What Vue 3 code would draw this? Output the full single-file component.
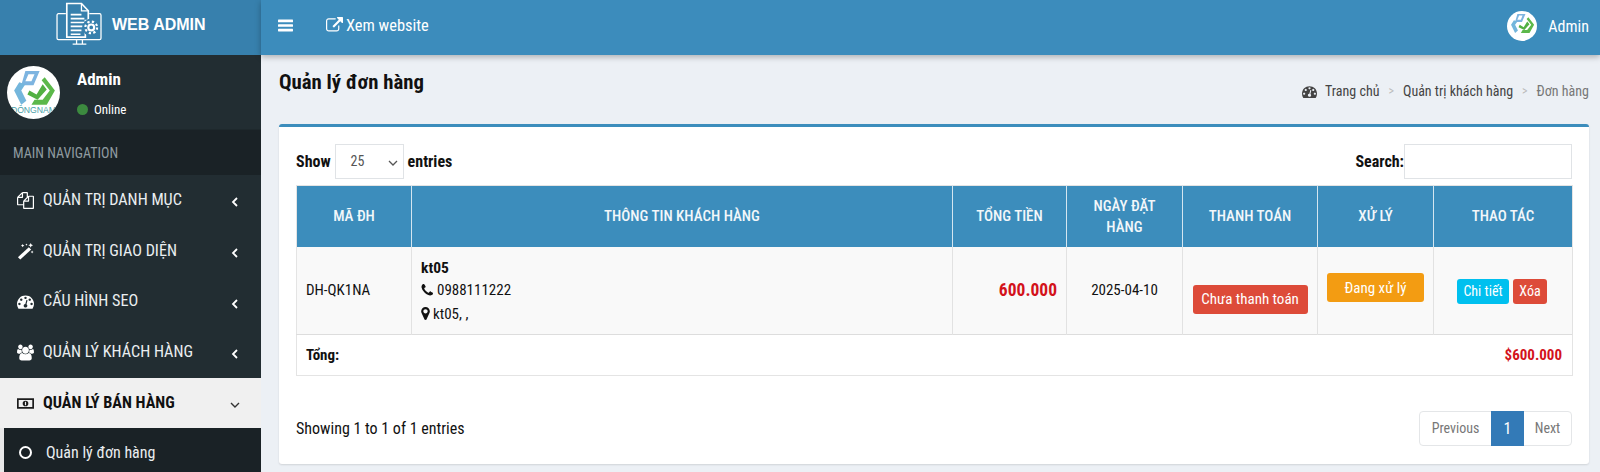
<script setup>
const menu = [
  { label: 'Quản trị danh mục', icon: 'files' },
  { label: 'Quản trị giao diện', icon: 'magic' },
  { label: 'Cấu hình SEO', icon: 'gauge' },
  { label: 'Quản lý khách hàng', icon: 'users' },
]
const gauge = 'M384 1152q0-53-37.5-90.5t-90.5-37.5-90.5 37.5-37.5 90.5 37.5 90.5 90.5 37.5 90.5-37.5 37.5-90.5zm192-448q0-53-37.5-90.5t-90.5-37.5-90.5 37.5-37.5 90.5 37.5 90.5 90.5 37.5 90.5-37.5 37.5-90.5zm428 481l101-382q6-26-7.5-48.5t-38.5-29.5-48 6.5-30 39.5l-101 382q-60 5-107 43.5t-63 98.5q-20 77 20 146t117 89 146-20 89-117q16-60-6-117t-72-91zm660-33q0-53-37.5-90.5t-90.5-37.5-90.5 37.5-37.5 90.5 37.5 90.5 90.5 37.5 90.5-37.5 37.5-90.5zm-640-640q0-53-37.5-90.5t-90.5-37.5-90.5 37.5-37.5 90.5 37.5 90.5 90.5 37.5 90.5-37.5 37.5-90.5zm448 192q0-53-37.5-90.5t-90.5-37.5-90.5 37.5-37.5 90.5 37.5 90.5 90.5 37.5 90.5-37.5 37.5-90.5zm320 448q0 261-141 483-19 29-54 29h-1402q-35 0-54-29-141-221-141-483 0-182 71-348t191-286 286-191 348-71 348 71 286 191 191 286 71 348z'
const files = 'M1696 384q40 0 68 28t28 68v1216q0 40-28 68t-68 28h-960q-40 0-68-28t-28-68v-288h-544q-40 0-68-28t-28-68v-672q0-40 20-88t48-76l408-408q28-28 76-48t88-20h416q40 0 68 28t28 68v328q68-40 128-40h416zm-544 213l-299 299h299v-299zm-640-384l-299 299h299v-299zm196 647l316-316v-416h-384v416q0 40-28 68t-68 28h-416v640h512v-256q0-40 20-88t48-76zm956 804v-1152h-384v416q0 40-28 68t-68 28h-416v640h896z'
const users = 'M593 896q-162 5-265 128h-134q-82 0-138-40.500t-56-118.500q0-353 124-353 6 0 43.500 21t97.500 42.500 119 21.500q67 0 133-23-5 37-5 66 0 139 81 256zm1071 637q0 120-73 189.500t-194 69.500h-874q-121 0-194-69.500t-73-189.500q0-53 3.500-103.500t14-109 26.500-108.500 43-97.500 62-81 85.500-53.500 111.500-20q10 0 43 21.500t73 48 107 48 135 21.500 135-21.500 107-48 73-48 43-21.500q61 0 111.500 20t85.500 53.500 62 81 43 97.500 26.500 108.500 14 109 3.500 103.500zm-1024-1277q0 106-75 181t-181 75-181-75-75-181 75-181 181-75 181 75 75 181zm704 384q0 159-112.500 271.500t-271.500 112.500-271.500-112.500-112.500-271.500 112.500-271.500 271.500-112.500 271.500 112.500 112.500 271.500zm576 225q0 78-56 118.500t-138 40.500h-134q-103-123-265-128 81-117 81-256 0-29-5-66 66 23 133 23 59 0 119-21.500t97.500-42.500 43.500-21q124 0 124 353zm-128-609q0 106-75 181t-181 75-181-75-75-181 75-181 181-75 181 75 75 181z'
</script>

<template>
  <div class="page">
    <aside class="sidebar">
      <div class="brand">
        <svg class="brand-icon" viewBox="0 0 48 44" fill="none" stroke="#fff" stroke-width="1.300">
          <path d="M10 12H2.500a1.500 1.500 0 0 0-1.500 1.500V37a1.500 1.500 0 0 0 1.500 1.500h42a1.500 1.500 0 0 0 1.500-1.500V13.500A1.500 1.500 0 0 0 44.500 12H34" />
          <path d="M11 36V1.500h15l7 7.500v10H30V36z" fill="#3780ad" stroke-width="1.700" />
          <path d="M26 1.500V9h7" stroke-width="1.300" />
          <path d="M15 13h11M15 17h14M15 21h14M15 25h12M15 29h11M15 33h10" stroke-width="1.700" />
          <circle cx="36" cy="26" r="9" fill="#3780ad" stroke="none" />
          <circle cx="36" cy="26" r="3" stroke-width="2.200" />
          <circle cx="36" cy="26" r="6" stroke-width="2.200" stroke-dasharray="2.300 2.400" />
          <path d="M17 43h14M21 39v4M27 39v4" />
        </svg>
        <span class="brand-text">WEB ADMIN</span>
      </div>
      <div class="user-panel">
        <svg class="avatar" viewBox="0 0 52 52">
          <clipPath id="disc"><circle cx="26" cy="26" r="26" /></clipPath>
          <circle cx="26" cy="26" r="26" fill="#fff" />
          <path fill-rule="evenodd" d="M18 5h14l-6 14H14zM21 8l-3 7h6l3-7z" fill="#7db4e0" />
          <path d="M12 16l-5 8 7 14 5-4-5-10 4-6z" fill="#74b6dc" />
          <path d="M37 11l10 13-8 14H24l3-5h8l7-9-8-10z" fill="#5cb84a" />
          <path d="M22 24l7 4 6-10 4 5-9 10-10-5z" fill="#52b043" />
          <text x="26" y="46.500" class="avatar-text" text-anchor="middle" clip-path="url(#disc)">ĐÔNGNAM</text>
        </svg>
        <div class="user-info">
          <b>Admin</b>
          <span class="online"><i class="dot"></i>Online</span>
        </div>
      </div>
      <div class="nav-title">MAIN NAVIGATION</div>
      <ul class="nav">
        <li v-for="item in menu" :key="item.label" class="nav-item">
          <svg v-if="item.icon === 'files'" class="nav-icon" viewBox="0 0 1792 1792" fill="#fff"><path :d="files" /></svg>
          <svg v-else-if="item.icon === 'magic'" class="nav-icon" viewBox="0 0 18 18" fill="#fff">
            <path d="M1 15L12.500 4.500l2.500 2.500L3.500 17.500z" />
            <path d="M14.500 0l.8 1.700 1.700.8-1.700.8-.8 1.700-.8-1.700-1.700-.8 1.700-.8zM6 1l.6 1.200 1.200.6-1.200.6L6 4.600l-.6-1.200-1.200-.6 1.200-.6zM10 .5l.4.8.8.4-.8.4-.4.8-.4-.8-.8-.4.8-.4zM16 8l.5 1 1 .5-1 .5-.5 1-.5-1-1-.5 1-.5z" />
          </svg>
          <svg v-else-if="item.icon === 'gauge'" class="nav-icon" viewBox="0 0 1792 1792" fill="#fff"><path :d="gauge" /></svg>
          <svg v-else class="nav-icon" viewBox="0 0 1920 1792" fill="#fff"><path :d="users" /></svg>
          <span class="nav-label">{{ item.label }}</span>
          <svg class="caret" viewBox="0 0 8 12" fill="none" stroke="#fff" stroke-width="1.800"><path d="M6 2L2 6l4 4" /></svg>
        </li>
        <li class="nav-item active">
          <svg class="nav-icon" viewBox="0 0 18 14" fill="#1c1c1c">
            <path fill-rule="evenodd" d="M0 1.500h18v11H0zM1.800 3.200v7.600h14.400V3.200zM9 4a3 3 0 1 1 0 6 3 3 0 0 1 0-6z" />
            <path d="M8.400 5.200h1.200v3.600H8.400z" fill="#f0f0f0" />
          </svg>
          <span class="nav-label">Quản lý bán hàng</span>
          <svg class="caret open" viewBox="0 0 12 8" fill="none" stroke="#333" stroke-width="1.400"><path d="M2 2l4 4 4-4" /></svg>
        </li>
        <li class="sub-item"><i class="ring"></i>Quản lý đơn hàng</li>
      </ul>
    </aside>

    <div class="main">
      <header class="topbar">
        <svg class="bars" viewBox="0 0 14 12" fill="#fff"><rect width="14" height="2.400" y=".5" rx=".5" /><rect width="14" height="2.400" y="4.800" rx=".5" /><rect width="14" height="2.400" y="9.100" rx=".5" /></svg>
        <a class="site-link">
          <svg viewBox="0 0 1792 1792" fill="#fff"><path d="M1408 928v320q0 119-84.500 203.500t-203.500 84.500h-832q-119 0-203.500-84.500t-84.500-203.500v-832q0-119 84.500-203.500t203.500-84.500h704q14 0 23 9t9 23v64q0 14-9 23t-23 9h-704q-66 0-113 47t-47 113v832q0 66 47 113t113 47h832q66 0 113-47t47-113v-320q0-14 9-23t23-9h64q14 0 23 9t9 23zm384-864v512q0 26-19 45t-45 19-45-19l-176-176-652 652q-10 10-23 10t-23-10l-114-114q-10-10-10-23t10-23l652-652-176-176q-19-19-19-45t19-45 45-19h512q26 0 45 19t19 45z" /></svg>
          Xem website
        </a>
        <div class="top-user">
          <svg class="top-avatar" viewBox="0 0 52 52">
            <circle cx="26" cy="26" r="26" fill="#fff" />
            <path fill-rule="evenodd" d="M18 5h14l-6 14H14zM21 8l-3 7h6l3-7z" fill="#7db4e0" />
            <path d="M12 16l-5 8 7 14 5-4-5-10 4-6z" fill="#74b6dc" />
            <path d="M37 11l10 13-8 14H24l3-5h8l7-9-8-10z" fill="#5cb84a" />
            <path d="M22 24l7 4 6-10 4 5-9 10-10-5z" fill="#52b043" />
          </svg>
          <span>Admin</span>
        </div>
      </header>

      <main class="content">
        <div class="content-head">
          <h1>Quản lý đơn hàng</h1>
          <div class="crumbs">
            <svg viewBox="0 0 1792 1792" fill="#444"><path :d="gauge" /></svg>
            <span>Trang chủ</span><i>&gt;</i><span>Quản trị khách hàng</span><i>&gt;</i><span class="last">Đơn hàng</span>
          </div>
        </div>

        <section class="box">
          <div class="tools">
            <label class="len">Show <span class="select">25<svg viewBox="0 0 12 8" fill="none" stroke="#555" stroke-width="1.300"><path d="M2 2l4 4 4-4" /></svg></span> entries</label>
            <label class="search">Search:<span class="input"></span></label>
          </div>

          <table>
            <colgroup>
              <col style="width:115px" /><col style="width:541px" /><col style="width:114px" /><col style="width:116px" /><col style="width:135px" /><col style="width:116px" /><col style="width:139px" />
            </colgroup>
            <thead>
              <tr>
                <th>MÃ ĐH</th><th>THÔNG TIN KHÁCH HÀNG</th><th>TỔNG TIỀN</th><th>NGÀY ĐẶT HÀNG</th><th>THANH TOÁN</th><th>XỬ LÝ</th><th>THAO TÁC</th>
              </tr>
            </thead>
            <tbody>
              <tr class="row">
                <td>DH-QK1NA</td>
                <td class="customer">
                  <b>kt05</b>
                  <div class="line">
                    <svg viewBox="128 128 1472 1472" fill="#111"><path d="M1600 1240q0 27-10 70.500t-21 68.500q-21 50-122 106-94 51-186 51-27 0-53-3.500t-57.500-12.500-47-14.500-55.500-20.500-49-18q-98-35-175-83-127-79-264-216t-216-264q-48-77-83-175-3-9-18-49t-20.500-55.500-14.500-47-12.500-57.500-3.500-53q0-92 51-186 56-101 106-122 25-11 68.500-21t70.500-10q14 0 21 3 18 6 53 76 11 19 30 54t35 63.500 31 53.500q3 4 17.500 25t21.500 35.500 7 28.500q0 20-28.500 50t-62 55-62 53-28.500 46q0 9 5 22.500t8.500 20.500 14 24 11.500 19q76 137 174 235t235 174q2 1 19 11.500t24 14 20.500 8.500 22.500 5q18 0 46-28.500t53-62 55-62 50-28.500q14 0 28.500 7t35.500 21.500 25 17.500q25 15 53.500 31t63.500 35 54 30q70 35 76 53 3 7 3 21z" /></svg>
                    0988111222
                  </div>
                  <div class="line addr">
                    <svg viewBox="384 128 1024 1536" fill="#111"><path d="M1152 640q0-106-75-181t-181-75-181 75-75 181 75 181 181 75 181-75 75-181zm256 0q0 109-33 179l-364 774q-16 33-47.500 52t-67.500 19-67.500-19-46.500-52l-365-774q-33-70-33-179 0-212 150-362t362-150 362 150 150 362z" /></svg>
                    kt05, ,
                  </div>
                </td>
                <td class="money">600.000</td>
                <td class="center">2025-04-10</td>
                <td class="center"><button class="btn red pay">Chưa thanh toán</button></td>
                <td class="center"><button class="btn orange state">Đang xử lý</button></td>
                <td class="center actions"><button class="btn cyan">Chi tiết</button><button class="btn red">Xóa</button></td>
              </tr>
              <tr class="sum">
                <td colspan="2"><b>Tổng:</b></td>
                <td colspan="5" class="total">$600.000</td>
              </tr>
            </tbody>
          </table>

          <div class="foot">
            <span>Showing 1 to 1 of 1 entries</span>
            <div class="pager"><a>Previous</a><a class="cur">1</a><a>Next</a></div>
          </div>
        </section>
      </main>
    </div>
  </div>
</template>

<style>
html, body { margin: 0; overflow: hidden; }
</style>

<style scoped>
.page {
  display: flex;
  width: 1600px;
  height: 472px;
  overflow: hidden;
  font-family: Roboto, "Liberation Sans", sans-serif;
  font-stretch: 75%;
  font-size: 14px;
  color: #111;
  background: #ecf0f5;
}
.sidebar {
  width: 261px;
  flex: none;
  background: #222d32;
  color: #fff;
}
.brand {
  height: 55px;
  background: #3780ad;
  display: flex;
  align-items: center;
  padding-left: 56px;
  gap: 9px;
}
.brand-icon { width: 47px; height: 43px; margin-top: -8px; }
.brand-text {
  font-family: "Liberation Sans", sans-serif;
  font-stretch: normal;
  font-weight: 700;
  font-size: 16px;
  margin-top: -5px;
}
.user-panel {
  height: 75px;
  display: flex;
  padding: 11px 0 0 7px;
  box-sizing: border-box;
  border-bottom: 1px solid #1e282c;
}
.avatar { width: 53px; height: 53px; }
.avatar-text { font-size: 8.500px; fill: #4a9fa8; font-family: "Liberation Sans", sans-serif; }
.user-info { margin-left: 17px; display: flex; flex-direction: column; }
.user-info b { font-size: 17px; margin-top: 3px; line-height: 20px; }
.online { display: flex; align-items: center; font-size: 13px; margin-top: 13px; }
.dot { width: 11px; height: 11px; border-radius: 50%; background: #3c8a3f; margin-right: 6px; }
.nav-title {
  height: 45px;
  background: #1a2226;
  color: #8f9ba0;
  display: flex;
  align-items: center;
  padding-left: 13px;
  font-size: 14px;
}
.nav { list-style: none; margin: 0; padding: 0; }
.nav-item {
  height: 50.700px;
  display: flex;
  align-items: center;
  padding-left: 17px;
  color: #eaeef0;
  font-size: 16.200px;
  text-transform: uppercase;
  position: relative;
}
.nav-icon { width: 17px; height: 17px; flex: none; margin-right: 9px; }
.nav-label { flex: 1; margin-top: -2px; }
.caret { width: 8px; height: 12px; margin-right: 22px; margin-top: 4px; }
.caret.open { width: 12px; height: 8px; margin-right: 20px; }
.nav-item.active { background: #f0f0f0; color: #111; font-weight: 700; }
.sub-item {
  height: 44px;
  background: #1a2226;
  border-left: 4px solid #e8e8e8;
  display: flex;
  align-items: center;
  padding: 4px 0 0 15px;
  box-sizing: border-box;
  font-size: 16px;
  color: #eaeef0;
}
.ring { width: 9px; height: 9px; border: 2.500px solid #fff; border-radius: 50%; margin-right: 14px; }
.main { flex: 1; min-width: 0; display: flex; flex-direction: column; }
.topbar {
  height: 55px;
  flex: none;
  box-sizing: border-box;
  background: #3c8cbc;
  color: #fff;
  display: flex;
  align-items: center;
  padding: 0 11px 4px 17px;
  box-shadow: 0 2px 6px rgba(0, 0, 0, .28);
  position: relative;
  font-size: 16.400px;
}
.bars { width: 15px; height: 13px; }
.site-link { display: flex; align-items: center; margin-left: 33px; gap: 3px; }
.site-link svg { width: 17px; height: 17px; }
.top-user { margin-left: auto; display: flex; align-items: center; gap: 11px; font-size: 16px; margin-bottom: -1px; }
.top-avatar { width: 30px; height: 30px; }
.content { flex: 1; padding: 0 11px 0 18px; }
.content-head { display: flex; justify-content: space-between; height: 69px; }
h1 { margin: 14px 0 0; font-size: 20.800px; font-weight: 700; line-height: 26px; }
.crumbs { display: flex; align-items: center; height: 20px; margin-top: 26px; font-size: 14px; color: #444; }
.crumbs svg { width: 15px; height: 15px; margin-right: 8px; }
.crumbs i { color: #bbb; font-style: normal; margin: 0 9px; font-size: 12px; }
.crumbs .last { color: #777; }
.box {
  height: 340px;
  background: #fff;
  border-top: 3px solid #3c8dbc;
  border-radius: 3px;
  box-sizing: border-box;
  padding: 17px 17px 0;
  box-shadow: 0 1px 2px rgba(0, 0, 0, .12);
  font-size: 16px;
}
.tools { display: flex; justify-content: space-between; height: 41px; }
.tools label { display: flex; align-items: flex-start; font-weight: 700; line-height: 35px; height: 35px; }
.select {
  width: 69px;
  height: 35px;
  box-sizing: border-box;
  border: 1px solid #e0e3e6;
  margin: 0 4px;
  font-weight: 400;
  color: #555;
  font-size: 14px;
  padding-left: 15px;
  position: relative;
  line-height: 33px;
}
.select svg { position: absolute; right: 4px; top: 14px; width: 12px; height: 8px; }
.input { display: block; width: 168px; height: 35px; box-sizing: border-box; border: 1px solid #e0e3e6; }
table {
  border-collapse: collapse;
  table-layout: fixed;
  width: 1276px;
  border: 1px solid #e4e4e4;
}
th {
  height: 61px;
  padding: 0 10px;
  background: #3c8dbc;
  color: #f2f7fa;
  font-weight: 500;
  font-size: 15px;
  line-height: 21px;
  border-right: 1px solid #d5e6f0;
}
th:last-child { border-right: 0; }
td { padding: 0 9px; border-right: 1px solid #e2e2e2; font-size: 15px; }
.row { height: 87px; background: #f9f9f9; border-bottom: 1px solid #ddd; }
.customer { padding-top: 2px; }
.customer b { display: block; font-size: 15.500px; line-height: 20px; margin-top: 1px; }
.line { display: flex; align-items: center; gap: 4px; line-height: 24px; }
.line svg { width: 12px; height: 12px; }
.addr { gap: 3px; }
.addr svg { width: 9px; height: 13px; }
.money { text-align: right; color: #d3121b; font-weight: 700; font-size: 17.500px; }
.center { text-align: center; padding: 0; }
.btn {
  border: 0;
  border-radius: 3px;
  color: #fff;
  font: inherit;
  font-size: 15px;
  font-stretch: 75%;
  padding: 0;
}
.red { background: #dd4b39; }
.orange { background: #f39c12; }
.cyan { background: #00c0ef; }
.pay { width: 115px; height: 29px; margin-top: 18px; display: inline-block; }
.state { width: 97px; height: 29px; margin-top: -13px; display: inline-block; }
.actions { padding: 2px 2px 0 0; }
.actions .btn { height: 25px; font-size: 14px; width: 52px; }
.actions .btn + .btn { width: 34px; margin-left: 4px; }
.sum { height: 41px; }
.sum td { border-right: 0; }
.total { text-align: right; color: #d3121b; font-weight: 700; padding-right: 10px; }
.foot { display: flex; justify-content: space-between; align-items: center; margin-top: 35px; width: 1276px; height: 35px; }
.pager { display: flex; height: 35px; border: 1px solid #e4e6e8; border-radius: 4px; box-sizing: border-box; color: #777; font-size: 14px; }
.pager a { display: flex; align-items: center; justify-content: center; padding: 0 12px; }
.pager a:first-child { width: 71px; padding: 0; }
.pager .cur { background: #337ab7; color: #fff; width: 33px; padding: 0; margin: -1px 0; font-size: 16px; }
.pager a:last-child { width: 47px; padding: 0; }
</style>
